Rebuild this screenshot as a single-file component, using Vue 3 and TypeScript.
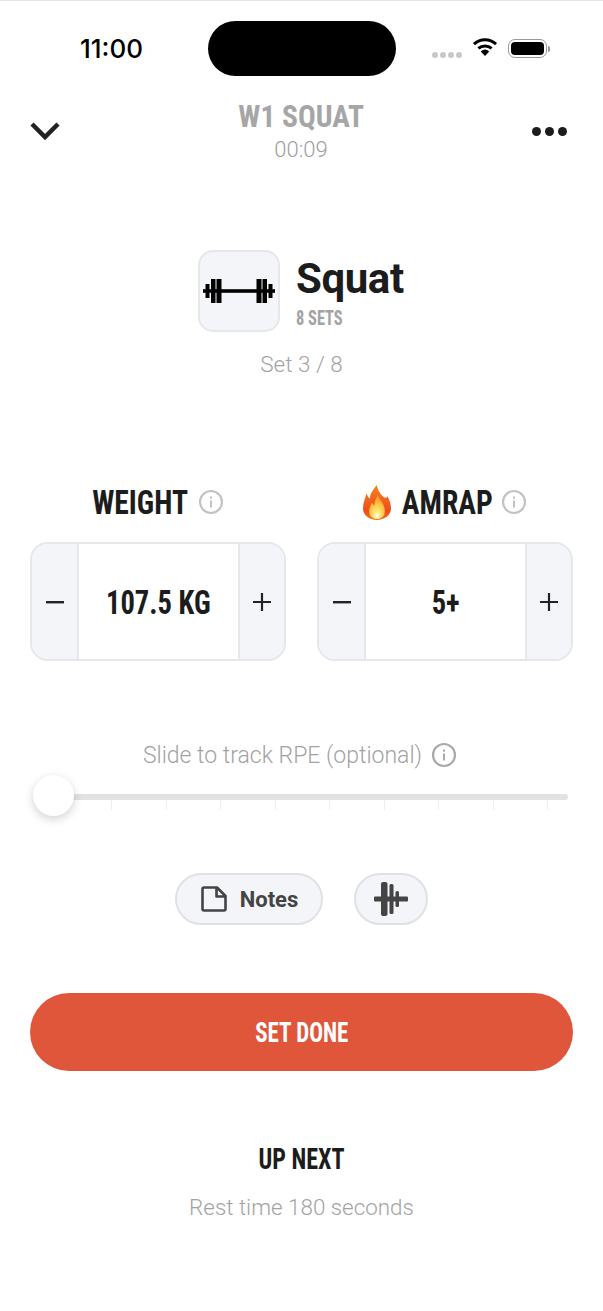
<template>
  <div class="screen">
    <!-- status bar -->
    <div class="status-bar">
      <span class="clock">11:00</span>
      <div class="island"></div>
      <div class="status-icons">
        <div class="signal"><i></i><i></i><i></i><i></i></div>
        <svg class="wifi" width="26" height="20" viewBox="0 0 26 20">
          <path d="M2 7.2a16 16 0 0 1 22 0" fill="none" stroke="#000" stroke-width="3" />
          <path d="M6.4 11.4a10 10 0 0 1 13.2 0" fill="none" stroke="#000" stroke-width="3" />
          <path d="M8.8 14.4a6.5 6.5 0 0 1 8.4 0L13 19z" fill="#000" />
        </svg>
        <div class="battery"><div class="battery-fill"></div></div>
        <div class="battery-cap"></div>
      </div>
    </div>

    <!-- nav -->
    <div class="nav">
      <svg class="chevron" width="32" height="20" viewBox="0 0 32 20">
        <path d="M3 3l13 13L29 3" fill="none" stroke="#222" stroke-width="4.500" />
      </svg>
      <div class="nav-title">
        <div class="workout">W1 SQUAT</div>
        <div class="timer">00:09</div>
      </div>
      <div class="more"><i></i><i></i><i></i></div>
    </div>

    <!-- exercise -->
    <div class="exercise">
      <div class="tile">
        <svg width="72" height="26" viewBox="0 0 72 26">
          <rect x="0" y="11.200" width="72" height="3.600" fill="#000" />
          <rect x="2.500" y="6" width="4" height="14" fill="#000" />
          <rect x="8" y="1" width="4.500" height="24" fill="#000" />
          <rect x="13.500" y="1" width="5" height="24" fill="#000" />
          <rect x="53.500" y="1" width="5" height="24" fill="#000" />
          <rect x="59.500" y="1" width="4.500" height="24" fill="#000" />
          <rect x="65.500" y="6" width="4" height="14" fill="#000" />
        </svg>
      </div>
      <div>
        <div class="exercise-name">Squat</div>
        <div class="exercise-sets">8 SETS</div>
      </div>
    </div>
    <div class="set-count">Set {{ currentSet }} / {{ totalSets }}</div>

    <!-- steppers -->
    <div class="fields">
      <div v-for="field in fields" :key="field.label" class="field">
        <div class="field-label">
          <svg v-if="field.flame" class="flame" width="28" height="35" viewBox="0 0 32 36" preserveAspectRatio="none">
            <defs>
              <linearGradient id="flameOuter" x1="0" y1="0" x2="0" y2="1">
                <stop offset="0" stop-color="#f9831c" />
                <stop offset="0.75" stop-color="#ef4a1e" />
                <stop offset="1" stop-color="#f5761f" />
              </linearGradient>
              <radialGradient id="flameInner" cx="0.5" cy="0.85" r="0.75">
                <stop offset="0" stop-color="#fffdf0" />
                <stop offset="0.3" stop-color="#ffe56a" />
                <stop offset="1" stop-color="#fb9c1f" />
              </radialGradient>
            </defs>
            <path d="M15.600 0C17 5 19 9 23 12c2 1.500 3.500 1.500 5-.5 2 3.500 4 7.500 4 12.500 0 7-7 12-16 12S0 31 0 24c0-6 3-11 4-15.500C5 11 6 13 8 14c0-6 4-9 7.600-14z" fill="url(#flameOuter)" />
            <path d="M17 10c1 5 8 9 8 17 0 5-4 8-9 8s-9-3-9-8c0-4 2-6 3-9 1 1.500 2 2.500 3 3 0-4 2-7 4-11z" fill="url(#flameInner)" />
          </svg>
          <span class="label-text">{{ field.label }}</span>
          <svg class="info" width="26" height="26" viewBox="0 0 26 26">
            <circle cx="13" cy="13" r="11" fill="none" stroke="#c2c2c2" stroke-width="2.200" />
            <rect x="12" y="11.500" width="2" height="7" fill="#c2c2c2" />
            <rect x="12" y="7.500" width="2" height="2.200" fill="#c2c2c2" />
          </svg>
        </div>
        <div class="stepper">
          <div class="step">
            <svg width="20" height="20" viewBox="0 0 20 20"><rect x="1" y="9" width="18" height="2.400" fill="#222" /></svg>
          </div>
          <div class="value"><span>{{ field.value }}</span></div>
          <div class="step">
            <svg width="20" height="20" viewBox="0 0 20 20"><path d="M1 10h18M10 1v18" stroke="#222" stroke-width="2.200" fill="none" /></svg>
          </div>
        </div>
      </div>
    </div>

    <!-- RPE slider -->
    <div class="rpe-label">
      <span>Slide to track RPE (optional)</span>
      <svg class="info" width="26" height="26" viewBox="0 0 26 26">
        <circle cx="13" cy="13" r="11" fill="none" stroke="#aaa" stroke-width="2.200" />
        <rect x="12" y="11.500" width="2" height="7" fill="#aaa" />
        <rect x="12" y="7.500" width="2" height="2.200" fill="#aaa" />
      </svg>
    </div>
    <div class="slider">
      <div class="track"></div>
      <div class="ticks">
        <i v-for="n in 10" :key="n"></i>
      </div>
      <div class="thumb"></div>
    </div>

    <!-- actions -->
    <div class="actions">
      <div class="pill notes">
        <svg width="28" height="28" viewBox="0 0 28 28">
          <path d="M2.500 4a1.500 1.500 0 0 1 1.500-1.500h13L25.500 11v13a1.500 1.500 0 0 1-1.500 1.500H4A1.500 1.500 0 0 1 2.500 24zM16.500 3v8.500H25" fill="none" stroke="#444" stroke-width="2.600" stroke-linejoin="round" />
        </svg>
        <span>Notes</span>
      </div>
      <div class="pill plates">
        <svg width="34" height="34" viewBox="0 0 34 34">
          <rect x="0" y="14.500" width="34" height="5" rx="1" fill="#444" />
          <rect x="7" y="0" width="6.500" height="34" rx="2" fill="#444" />
          <rect x="15.500" y="2" width="4" height="30" rx="1.500" fill="#444" />
          <rect x="21.500" y="9" width="3.500" height="16" rx="1.500" fill="#444" />
        </svg>
      </div>
    </div>

    <div class="done"><span>SET DONE</span></div>

    <div class="up-next">UP NEXT</div>
    <div class="rest">Rest time {{ restSeconds }} seconds</div>
  </div>
</template>

<script setup lang="ts">
import { ref } from 'vue'

interface Field {
  label: string
  value: string
  flame?: boolean
}

const currentSet = ref(3)
const totalSets = ref(8)
const restSeconds = ref(180)

const fields = ref<Field[]>([
  { label: 'WEIGHT', value: '107.5 KG' },
  { label: 'AMRAP', value: '5+', flame: true }
])
</script>

<style>
html,
body {
  background: #fff;
}
</style>

<style scoped>
.screen {
  width: 603px;
  height: 1311px;
  box-sizing: border-box;
  overflow: hidden;
  border-top: 1px solid #e6e6e6;
  background: #fff;
  font-family: Roboto, "Liberation Sans", sans-serif;
  color: #1c1c1c;
  text-align: center;
}

.status-bar {
  position: relative;
  display: flex;
  align-items: center;
  height: 55px;
  margin-top: 20px;
  padding-left: 80px;
}

.clock {
  font-family: Inter, sans-serif;
  font-size: 26px;
  font-weight: 500;
  color: #000;
  width: 128px;
  text-align: left;
}

.island {
  width: 188px;
  height: 55px;
  border-radius: 28px;
  background: #000;
}

.status-icons {
  display: flex;
  align-items: center;
  margin-left: 36px;
}

.signal {
  display: flex;
  gap: 2px;
  margin-top: 13px;
  margin-right: 10px;
}

.signal i {
  width: 6px;
  height: 6px;
  border-radius: 50%;
  background: #c8c8c8;
}

.wifi {
  margin-top: -3px;
  margin-right: 10px;
}

.battery {
  width: 33px;
  height: 13px;
  padding: 2px;
  box-sizing: content-box;
  border: 1.500px solid #999;
  border-radius: 7px;
}

.battery-fill {
  width: 100%;
  height: 100%;
  border-radius: 4px;
  background: #000;
}

.battery-cap {
  width: 2px;
  height: 6px;
  margin-left: 1px;
  border-radius: 0 2px 2px 0;
  background: #999;
}

.nav {
  display: grid;
  grid-template-columns: 1fr auto 1fr;
  margin-top: 23px;
  padding: 0 36px 0 29px;
}

.chevron {
  margin-top: 22px;
}

.workout {
  font-family: Roboto, sans-serif;
  font-stretch: 75%;
  font-size: 31px;
  font-weight: 700;
  line-height: 36px;
  color: #a6a6a6;
  transform: scaleX(0.95);
}

.nav-title {
  position: relative;
  left: 3px;
}

.timer {
  margin-top: 1px;
  font-size: 22px;
  font-weight: 300;
  line-height: 28px;
  color: #a0a0a0;
}

.more {
  display: flex;
  justify-content: flex-end;
  gap: 4px;
  margin-top: 28px;
}

.more i {
  width: 9px;
  height: 9px;
  border-radius: 50%;
  background: #1c1c1c;
}

.exercise {
  display: flex;
  justify-content: center;
  gap: 16px;
  margin-top: 86px;
  text-align: left;
}

.tile {
  display: flex;
  align-items: center;
  justify-content: center;
  width: 82px;
  height: 82px;
  box-sizing: border-box;
  border: 2px solid #e6e7ec;
  border-radius: 15px;
  background: #f4f5f9;
}

.exercise-name {
  margin-top: 5px;
  font-size: 42px;
  font-weight: 700;
  line-height: 48px;
  letter-spacing: -0.4px;
  width: 109px;
}

.exercise-sets {
  margin-top: 3px;
  font-family: Roboto, sans-serif;
  font-stretch: 75%;
  font-size: 21px;
  font-weight: 700;
  line-height: 24px;
  color: #a3a3a3;
  transform: scaleX(0.78);
  transform-origin: left center;
}

.set-count {
  margin-top: 16px;
  font-size: 22.500px;
  font-weight: 300;
  line-height: 32px;
  color: #a3a3a3;
}

.fields {
  display: flex;
  justify-content: space-between;
  margin-top: 102px;
  padding: 0 30px;
}

.field {
  width: 256px;
}

.field-label {
  display: flex;
  align-items: center;
  justify-content: center;
  gap: 9px;
  height: 40px;
  font-family: Roboto, sans-serif;
  font-stretch: 75%;
  font-size: 34px;
  font-weight: 700;
  color: #1c1c1c;
}

.flame {
  margin-right: 2px;
}

.label-text {
  margin: 0 -7px;
  transform: scaleX(0.87);
}

.stepper {
  display: flex;
  height: 119px;
  margin-top: 20px;
  box-sizing: border-box;
  overflow: hidden;
  border: 2px solid #e6e7ec;
  border-radius: 18px;
}

.step {
  display: flex;
  align-items: center;
  justify-content: center;
  width: 45px;
  background: #f4f5f9;
}

.step:last-child {
  width: 44px;
}

.value {
  flex: 1;
  display: flex;
  align-items: center;
  justify-content: center;
  border-left: 2px solid #e6e7ec;
  border-right: 2px solid #e6e7ec;
  font-family: Roboto, sans-serif;
  font-stretch: 75%;
  font-size: 34px;
  font-weight: 700;
  color: #1c1c1c;
}

.value span {
  transform: scaleX(0.84);
}

.rpe-label {
  display: flex;
  align-items: center;
  justify-content: center;
  gap: 9px;
  height: 30px;
  margin-top: 79px;
  margin-left: -3px;
  font-size: 23px;
  font-weight: 300;
  color: #a3a3a3;
}

.slider {
  position: relative;
  height: 44px;
  margin: 4px 35px 0 33px;
}

.track {
  position: absolute;
  top: 20px;
  left: 0;
  right: 0;
  height: 6px;
  border-radius: 3px;
  background: #e2e2e2;
}

.ticks {
  display: flex;
  justify-content: space-between;
  position: absolute;
  top: 26px;
  left: 24px;
  right: 20px;
}

.ticks i {
  width: 1px;
  height: 10px;
  background: #eceef2;
}

.thumb {
  position: absolute;
  top: 1px;
  left: 0;
  width: 41px;
  height: 41px;
  border-radius: 50%;
  background: #fff;
  box-shadow: 0 3px 10px rgba(0, 0, 0, 0.18);
}

.actions {
  display: flex;
  justify-content: center;
  gap: 31px;
  margin-top: 55px;
}

.pill {
  display: flex;
  align-items: center;
  justify-content: center;
  height: 52px;
  box-sizing: border-box;
  border: 2px solid #e0e1e6;
  border-radius: 26px;
  background: #f4f5f9;
}

.notes {
  gap: 12px;
  width: 148px;
  font-size: 22px;
  font-weight: 700;
  color: #444;
}

.plates {
  width: 74px;
}

.done {
  display: flex;
  align-items: center;
  justify-content: center;
  height: 78px;
  margin: 68px 30px 0;
  border-radius: 39px;
  background: #e0563b;
  font-family: Roboto, sans-serif;
  font-stretch: 75%;
  font-size: 28px;
  font-weight: 700;
  color: #fff;
}

.done span {
  transform: scaleX(0.82);
}

.up-next {
  margin-top: 70px;
  font-family: Roboto, sans-serif;
  font-stretch: 75%;
  font-size: 29px;
  font-weight: 700;
  line-height: 36px;
  transform: scaleX(0.83);
}

.rest {
  margin-top: 15px;
  font-size: 22.400px;
  font-weight: 300;
  line-height: 30px;
  color: #a3a3a3;
}
</style>
